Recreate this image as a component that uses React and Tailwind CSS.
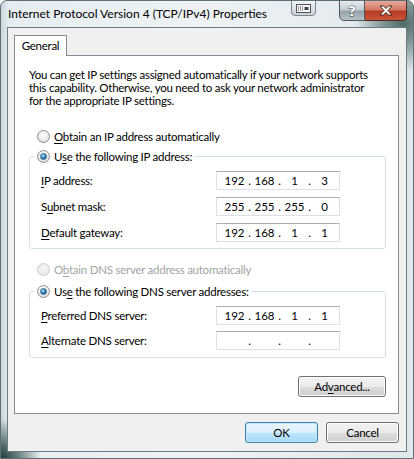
import React, { Fragment } from "react";

function U({ children }) {
  return <span className="underline decoration-1 underline-offset-[2px]">{children}</span>;
}

function Radio({ checked, disabled }) {
  if (disabled) {
    return (
      <span className="inline-flex w-[13px] h-[13px] shrink-0 rounded-full border border-[#cbcbcb] bg-[radial-gradient(circle_at_50%_40%,#f7f7f7_0,#ececec_60%,#e0e0e0_100%)]" />
    );
  }
  return (
    <span className="inline-flex items-center justify-center w-[13px] h-[13px] shrink-0 rounded-full border border-[#8f8f8f] bg-[radial-gradient(circle_at_50%_35%,#ffffff_0,#ebebeb_55%,#cfcfcf_100%)]">
      {checked ? (
        <span className="w-[7px] h-[7px] rounded-full border border-[#2c628b] bg-[radial-gradient(circle_at_35%_30%,#bfe6fb_0,#3f8dc6_45%,#1c4a78_100%)]" />
      ) : null}
    </span>
  );
}

function IpBox({ parts }) {
  return (
    <div className="flex items-center w-[124px] h-[19px] bg-white border border-[#dde1e7] border-t-[#abadb3] pl-[4px] leading-[17px] tracking-normal">
      {parts.map((p, i) => (
        <Fragment key={i}>
          {i > 0 ? <span className="flex justify-center w-[3px]">.</span> : null}
          <span className="w-[27px] text-center">{p}</span>
        </Fragment>
      ))}
    </div>
  );
}

function Row({ label, parts }) {
  return (
    <div className="flex items-center h-[19px]">
      <span className="w-[186px] pl-[11px]">{label}</span>
      <IpBox parts={parts} />
    </div>
  );
}

function Btn({ children, primary, className = "" }) {
  const base =
    "flex items-center justify-center h-[21px] rounded-[3px] border " + className;
  if (primary) {
    return (
      <div className={base + " border-[#3c7fb1] bg-[linear-gradient(to_bottom,#eaf6fd_0,#d9f0fc_50%,#bee6fd_50%,#a7d9f5_100%)] shadow-[inset_0_0_0_1px_#c5e8fb]"}>
        {children}
      </div>
    );
  }
  return (
    <div className={base + " border-[#707070] bg-[linear-gradient(to_bottom,#f2f2f2_0,#ebebeb_50%,#dddddd_50%,#cfcfcf_100%)] shadow-[inset_0_0_0_1px_#fcfcfc]"}>
      {children}
    </div>
  );
}

export default function App() {
  return (
    <div
      className="relative w-[414px] h-[459px] overflow-hidden rounded-t-[7px] border border-[#5f6f75] text-[11.5px] tracking-[-0.25px] text-black bg-[radial-gradient(circle_at_402px_22px,#4d6a67_0,rgba(77,106,103,0.6)_22px,rgba(77,106,103,0)_48px),radial-gradient(circle_at_0px_458px,#1f3b3a_0,rgba(31,59,58,0.7)_14px,rgba(31,59,58,0)_40px),linear-gradient(to_right,#c8d7df_0,#e6edf1_8px,#eef2f5_50%,#dfe7eb_100%)]"
      style={{ fontFamily: 'Lato, "Open Sans", sans-serif' }}
    >
      {/* title bar */}
      <div className="flex items-start h-[26px]">
        <div className="pl-[7px] pt-[5px] leading-[16px] text-[12px] tracking-normal text-black whitespace-nowrap">
          Internet Protocol Version 4 (TCP/IPv4) Properties
        </div>
        <div className="ml-auto flex items-start mr-[6px]">
          <div className="flex items-center justify-center w-[25px] h-[16px] mt-[-1px] rounded-b-[4px] border border-[#7d8589] bg-[linear-gradient(to_bottom,#f4f6f8_0,#dfe4e8_50%,#c9d0d5_100%)]">
            <svg width="15" height="9" viewBox="0 0 15 9">
              <rect x="0.5" y="0.5" width="14" height="8" fill="#f8f8f8" stroke="#555" />
              <rect x="2" y="2" width="5" height="5" fill="#9aa0a4" />
              <line x1="3.5" y1="2" x2="3.5" y2="7" stroke="#f0f0f0" />
              <line x1="5.5" y1="2" x2="5.5" y2="7" stroke="#f0f0f0" />
              <rect x="8.5" y="3" width="4" height="3" fill="#444" />
            </svg>
          </div>
          <div className="flex ml-[23px] mt-[-1px]">
            <div className="flex items-center justify-center w-[26px] h-[21px] rounded-bl-[5px] border border-[#4f5a60] bg-[linear-gradient(to_bottom,#e6ebee_0,#c5ced4_45%,#95a3ab_55%,#b6c3c9_100%)]">
              <span
                className="text-[14px] font-bold leading-none text-white"
                style={{ fontFamily: '"DejaVu Sans", sans-serif', WebkitTextStroke: "0.8px #2e3437", paintOrder: "stroke fill" }}
              >
                ?
              </span>
            </div>
            <div className="flex items-center justify-center w-[42px] h-[21px] rounded-br-[5px] border border-l-0 border-[#4a2a22] bg-[linear-gradient(to_bottom,#e8a99a_0,#d47a66_45%,#b73c22_55%,#c8553b_100%)]">
              <svg width="14" height="11" viewBox="0 0 14 11">
                <path
                  d="M1 1 H4.5 L7 3.6 L9.5 1 H13 L9 5.5 L13 10 H9.5 L7 7.4 L4.5 10 H1 L5 5.5 Z"
                  fill="#ffffff"
                  stroke="#3b1d16"
                  strokeWidth="0.9"
                  strokeLinejoin="round"
                />
              </svg>
            </div>
          </div>
        </div>
      </div>

      {/* client area */}
      <div className="mx-[6px] h-[425px] border border-[#6c7b81] bg-[#f0f0f0] flex flex-col pl-[6px] pr-[7px] pt-[7px] pb-[8px]">
        {/* tab */}
        <div className="relative z-10 flex items-center justify-center w-[53px] h-[21px] -mb-[1px] border border-b-0 border-[#898c95] bg-white leading-[16px]">
          General
        </div>
        {/* panel */}
        <div className="h-[359px] border border-[#898c95] bg-white flex flex-col">
          <p className="ml-[14px] mt-[12px] leading-[13px] whitespace-nowrap">
            You can get IP settings assigned automatically if your network supports
            <br />
            this capability. Otherwise, you need to ask your network administrator
            <br />
            for the appropriate IP settings.
          </p>

          <div className="flex items-center gap-[4px] h-[13px] ml-[22px] mt-[23px] leading-[13px]">
            <Radio />
            <span>
              <U>O</U>btain an IP address automatically
            </span>
          </div>

          <fieldset className="ml-[14px] mt-[7px] w-[357px] border border-[#d5dfe5] rounded-[3px] pb-[6px]">
            <legend className="ml-[5px] px-[2px] leading-[13px]">
              <span className="flex items-center gap-[4px]">
                <Radio checked />
                <span>
                  U<U>s</U>e the following IP address:
                </span>
              </span>
            </legend>
            <div className="flex flex-col gap-[7px] pt-[8px]">
              <Row label={<><U>I</U>P address:</>} parts={["192", "168", "1", "3"]} />
              <Row label={<>S<U>u</U>bnet mask:</>} parts={["255", "255", "255", "0"]} />
              <Row label={<><U>D</U>efault gateway:</>} parts={["192", "168", "1", "1"]} />
            </div>
          </fieldset>

          <div className="flex items-center gap-[4px] h-[13px] ml-[22px] mt-[14px] leading-[13px] text-[#a3a3a3]">
            <Radio disabled />
            <span>
              O<U>b</U>tain DNS server address automatically
            </span>
          </div>

          <fieldset className="ml-[14px] mt-[9px] w-[357px] border border-[#d5dfe5] rounded-[3px] pb-[7px]">
            <legend className="ml-[5px] px-[2px] leading-[13px]">
              <span className="flex items-center gap-[4px]">
                <Radio checked />
                <span>
                  Us<U>e</U> the following DNS server addresses:
                </span>
              </span>
            </legend>
            <div className="flex flex-col gap-[6px] pt-[8px]">
              <Row label={<><U>P</U>referred DNS server:</>} parts={["192", "168", "1", "1"]} />
              <Row label={<><U>A</U>lternate DNS server:</>} parts={["", "", "", ""]} />
            </div>
          </fieldset>

          <div className="flex justify-end mr-[12px] mt-[18px]">
            <Btn className="w-[88px]">
              Ad<U>v</U>anced...
            </Btn>
          </div>
        </div>

        <div className="flex justify-end gap-[8px] mt-[8px]">
          <Btn primary className="w-[73px]">
            OK
          </Btn>
          <Btn className="w-[73px]">Cancel</Btn>
        </div>
      </div>
    </div>
  );
}
